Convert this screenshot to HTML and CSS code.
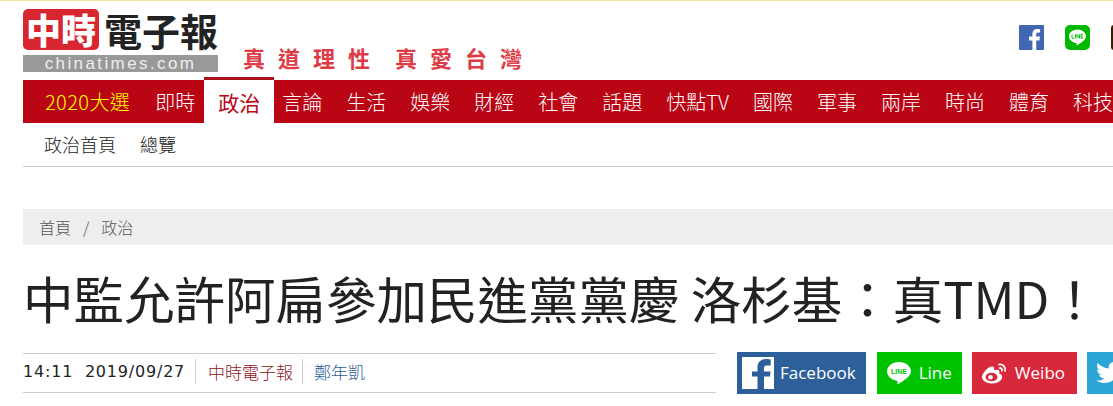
FILE: index.html
```html
<!DOCTYPE html>
<html lang="zh-Hant">
<head>
    <meta charset="UTF-8">
    <title>中監允許阿扁參加民進黨黨慶 洛杉基&#65306;真TMD&#65281;</title>
    <link rel="stylesheet" href="styles.css">
</head>
<body>
    <div class="container">
        <header class="header">
            <div class="logo">
                <div class="logo-top">
                    <span class="logo-red">中時</span>
                    <span class="logo-name">電子報</span>
                </div>
                <div class="logo-url">chinatimes.com</div>
            </div>
            <div class="slogan">真道理性 真愛台灣</div>
            <div class="header-icons">
                <svg class="header-icon" viewBox="0 0 25 25"><rect width="25" height="25" rx="1" fill="#4267b2"/><path d="M17.2 25v-9.600h3.200l.5-3.800h-3.700v-2.400c0-1.100.3-1.800 1.900-1.800h2V4.200c-.4 0-1.500-.2-2.900-.2-2.900 0-4.800 1.800-4.800 5v2.600H10v3.800h3.400V25z" fill="#fff"/></svg>
                <svg class="header-icon" viewBox="0 0 25 25"><rect width="25" height="25" rx="5" fill="#00b900"/><path d="M12.500 4.500c-4.700 0-8.500 3-8.500 6.800 0 3.400 3 6.200 7.100 6.700.8.200.6.600.4 1.900 0 .5.400.5.900.2 2.800-1.600 8.600-4.900 8.600-8.800 0-3.800-3.800-6.800-8.500-6.800z" fill="#fff"/><path d="M7 9.300v4h2.300M10.500 9.300v4M12 13.300v-4l2.500 4v-4M18 9.300h-2v4h2M16 11.300h2" fill="none" stroke="#00b900" stroke-width=".9"/></svg>
                <svg class="header-icon" viewBox="0 0 25 25"><rect width="25" height="25" rx="3" fill="#3a1c00"/></svg>
            </div>
        </header>

        <nav class="main-nav">
            <a class="nav-item nav-yellow">2020大選</a>
            <a class="nav-item">即時</a>
            <a class="nav-item active">政治</a>
            <a class="nav-item">言論</a>
            <a class="nav-item">生活</a>
            <a class="nav-item">娛樂</a>
            <a class="nav-item">財經</a>
            <a class="nav-item">社會</a>
            <a class="nav-item">話題</a>
            <a class="nav-item">快點TV</a>
            <a class="nav-item">國際</a>
            <a class="nav-item">軍事</a>
            <a class="nav-item">兩岸</a>
            <a class="nav-item">時尚</a>
            <a class="nav-item">體育</a>
            <a class="nav-item">科技</a>
        </nav>

        <div class="sub-nav">
            <a>政治首頁</a>
            <a>總覽</a>
        </div>

        <div class="breadcrumb">
            <a>首頁</a>
            <span class="sep">/</span>
            <a>政治</a>
        </div>

        <h1 class="title">中監允許阿扁參加民進黨黨慶 洛杉基&#65306;真TMD&#65281;</h1>

        <div class="article-bar">
            <div class="meta">
                <span class="meta-time">14:11&nbsp;&nbsp;2019/09/27</span>
                <span class="meta-source">中時電子報</span>
                <span class="meta-author">鄭年凱</span>
            </div>
            <div class="share">
                <a class="share-btn fb">
                    <svg class="fb-box" viewBox="0 0 32 32"><rect width="32" height="32" fill="#fff"/><path d="M22 32V19.500h6l.6-5H22v-3.300c0-1.700.7-2.700 2.700-2.700h4V2.400C28 2.300 26 2 23.800 2 19 2 15.500 5 15.500 10.300v4.200H10v5h5.500V32z" fill="#2d5f9a"/></svg>
                    Facebook
                </a>
                <a class="share-btn line">
                    <svg class="share-icon" viewBox="0 0 28 26"><path d="M14 1C6.800 1 1 5.600 1 11.200c0 5.100 4.500 9.300 10.700 10.100 1 .2.700 1 .6 3 0 .7.600.8 1.300.4C18 22 27 17 27 11.200 27 5.600 21.200 1 14 1z" fill="#fff"/><text class="line-mark" x="14" y="14.500">LINE</text></svg>
                    Line
                </a>
                <a class="share-btn weibo">
                    <svg class="share-icon" viewBox="0 0 28 24"><path d="M11.500 22.500C6 22.500 1 20 1 16c0-4 6.500-10.500 10-10.500 2.300 0 2.600 1.800 2 3.800 2-.7 5.500-1 5.500 1.500 0 .7-.2 1.200-.5 1.700 2 .6 3.200 1.800 3.200 3.500 0 3.500-4.700 6.500-9.700 6.500z" fill="#fff"/><ellipse cx="10.500" cy="16" rx="6" ry="4.300" fill="#d8283b"/><circle cx="9.500" cy="16.200" r="2.300" fill="#fff"/><path d="M18 3.500c3.500-.8 7 2.500 6 6.500M18.500 7c1.700-.3 2.800 1 2.400 2.800" fill="none" stroke="#fff" stroke-width="1.700" stroke-linecap="round"/></svg>
                    Weibo
                </a>
                <a class="share-btn twitter">
                    <svg class="share-icon" viewBox="0 0 28 24"><path d="M27 3.500c-1 .5-2 .7-3 .8 1.100-.7 1.900-1.700 2.300-2.900-1 .6-2.200 1-3.400 1.300C21.900 1.600 20.500 1 19 1c-3 0-5.300 2.400-5.300 5.300 0 .4 0 .8.100 1.200C9.400 7.300 5.500 5.200 2.800 2 1.400 4.500 2.100 7.500 4.500 9.100c-.9 0-1.700-.3-2.400-.7 0 2.600 1.800 4.700 4.300 5.200-.8.200-1.600.2-2.400.1.700 2.100 2.600 3.600 5 3.700C7 19 4 20 1 19.600 3.400 21.100 6.200 22 9.200 22c9.800 0 15.400-8.300 15-15.700 1.100-.8 2-1.700 2.800-2.800z" fill="#fff"/></svg>
                </a>
            </div>
        </div>
    </div>
</body>
</html>
```

FILE: styles.css
```css
html, body {
    margin: 0;
    padding: 0;
    overflow: hidden;
    background: white;
}
body {
    border-top: 1px solid #f5e39a;
    font-family: "Open Sans", "Noto Sans CJK TC", sans-serif;
    color: #222;
}
a {
    text-decoration: none;
    color: inherit;
}
.container {
    width: 1170px;
    margin-left: 23px;
}

/* header */
.header {
    display: flex;
    height: 76px;
}
.logo {
    width: 195px;
    padding-top: 8px;
}
.logo-top {
    display: flex;
    align-items: center;
    gap: 5px;
    height: 41px;
}
.logo-red {
    width: 77px;
    height: 41px;
    line-height: 39px;
    background: #d9252f;
    border-radius: 5px;
    color: white;
    font-family: "Noto Sans CJK TC", sans-serif;
    font-size: 35px;
    font-weight: 900;
    text-align: center;
}
.logo-name {
    color: #222;
    font-family: "Noto Sans CJK TC", sans-serif;
    font-size: 38px;
    line-height: 39px;
    font-weight: 700;
    white-space: nowrap;
}
.logo-url {
    height: 17px;
    margin-top: 5px;
    background: #999;
    color: #eee;
    font-family: "Liberation Sans", sans-serif;
    font-size: 17px;
    line-height: 17px;
    letter-spacing: 2.400px;
    text-align: center;
}
.slogan {
    align-self: flex-end;
    margin: 0 0 7px 25px;
    color: #de3b45;
    font-family: "Noto Sans CJK TC", sans-serif;
    font-size: 22px;
    line-height: 26px;
    font-weight: 700;
    letter-spacing: 13px;
    word-spacing: -6px;
    white-space: nowrap;
}
.header-icons {
    display: flex;
    gap: 21px;
    margin-left: auto;
    padding: 24px 57px 0 0;
}
.header-icon {
    display: block;
    width: 25px;
    height: 25px;
}

/* nav */
.main-nav {
    display: flex;
    height: 43px;
    margin-top: 3px;
    padding-left: 8px;
    background: #ba0515;
}
.nav-item {
    padding: 0 12px;
    color: white;
    font-family: "Noto Sans CJK TC", sans-serif;
    font-size: 20px;
    font-weight: 300;
    line-height: 44px;
    white-space: nowrap;
}
.nav-yellow {
    padding: 0 13px 0 14px;
    color: #ffff00;
    letter-spacing: .4px;
}
.active {
    margin: -3px -4px 0 -3px;
    padding: 0 14px;
    border-top: 3px solid #a8101c;
    background: white;
    color: #ba0515;
    font-size: 21px;
    font-weight: 400;
}

/* sub nav */
.sub-nav {
    display: flex;
    gap: 24px;
    height: 43px;
    padding-left: 21px;
    border-bottom: 1px solid #ccc;
    color: #222;
    font-family: "Noto Sans CJK TC", sans-serif;
    font-size: 18px;
    font-weight: 300;
    line-height: 43px;
}

/* breadcrumb */
.breadcrumb {
    display: flex;
    gap: 12px;
    height: 36px;
    margin-top: 42px;
    padding-left: 16px;
    background: #eee;
    color: #555;
    font-family: "Noto Sans CJK TC", sans-serif;
    font-size: 16px;
    font-weight: 300;
    line-height: 36px;
}

/* title */
.title {
    margin: 0;
    height: 108px;
    color: #222;
    font-family: "Noto Sans CJK TC", sans-serif;
    font-size: 50.500px;
    line-height: 104px;
    font-weight: 400;
    white-space: nowrap;
}

/* meta and share */
.article-bar {
    display: flex;
    gap: 21px;
}
.meta {
    display: flex;
    align-items: center;
    flex: 0 0 693px;
    box-sizing: border-box;
    height: 40px;
    padding-bottom: 3px;
    border-top: 1px solid #ccc;
    border-bottom: 1px solid #ccc;
    font-size: 17px;
    font-weight: 300;
}
.meta-time {
    padding-right: 10px;
    color: #222;
    font-family: "DejaVu Sans", sans-serif;
    font-size: 16px;
    font-weight: 400;
    letter-spacing: .8px;
}
.meta-source {
    padding: 0 9px 0 12px;
    border-left: 1px solid #ccc;
    color: #8c1420;
    font-family: "Noto Sans CJK TC", sans-serif;
}
.meta-author {
    padding-left: 11px;
    border-left: 1px solid #ccc;
    color: #2d5f9a;
    font-family: "Noto Sans CJK TC", sans-serif;
}
.share {
    display: flex;
    gap: 10px;
    margin-top: -1px;
}
.share-btn {
    display: flex;
    align-items: center;
    gap: 6px;
    box-sizing: border-box;
    height: 42px;
    padding: 0 11px 2px 8px;
    color: white;
    font-size: 17px;
    white-space: nowrap;
}
.fb {
    margin-right: 1px;
    padding-left: 5px;
    padding-right: 10px;
    background: #2d5f9a;
}
.fb-box {
    width: 32px;
    height: 32px;
    margin-bottom: -2px;
}
.line {
    padding-right: 10px;
    background: #00c300;
}
.weibo {
    padding-left: 9px;
    padding-right: 12px;
    background: #d8283b;
}
.twitter {
    padding-right: 0;
    background: #2ca5d6;
}
.share-icon {
    width: 28px;
    height: 24px;
    margin-bottom: -2px;
}
.line-mark {
    fill: #00c300;
    font-family: "Liberation Sans", sans-serif;
    font-size: 7.500px;
    font-weight: 700;
    text-anchor: middle;
}
```
